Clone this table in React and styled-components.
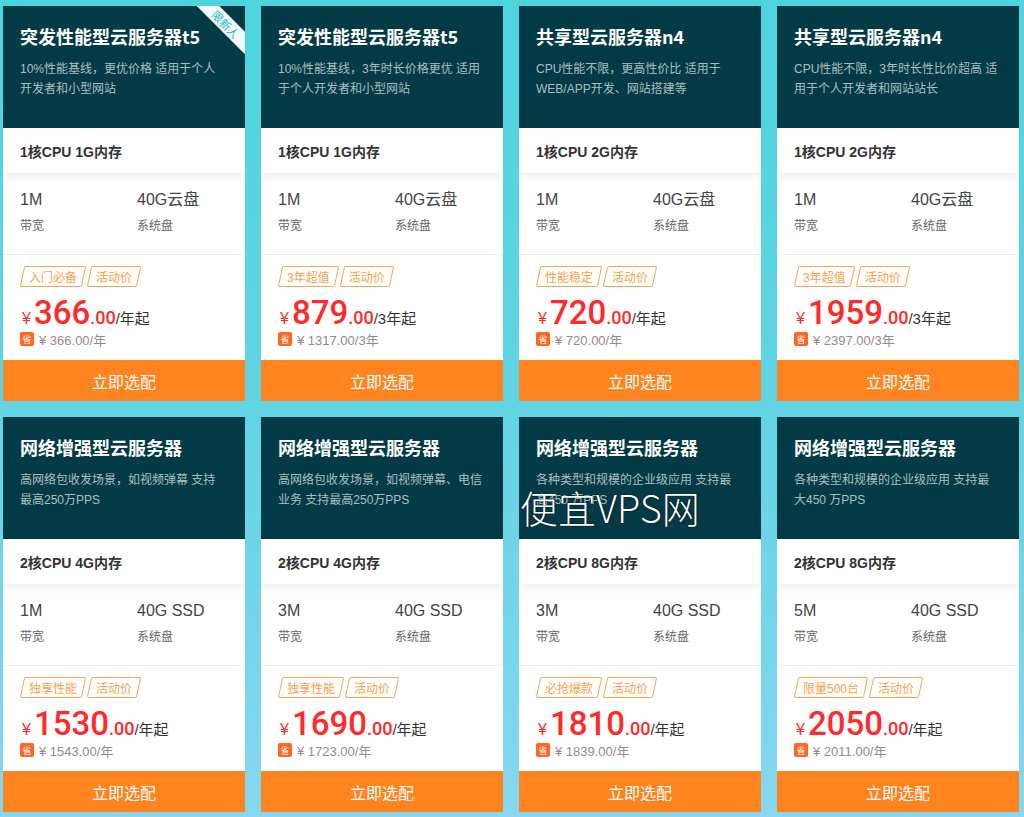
import React from 'react'
import styled, { createGlobalStyle } from 'styled-components'

const GlobalStyle = createGlobalStyle`
  html, body {
    margin: 0;
    padding: 0;
  }
  body {
    font-family: "Liberation Sans", "Noto Sans CJK SC", sans-serif;
    background: linear-gradient(180deg, #4dd4dc 0%, #62d4e3 50%, #86d7ef 100%);
    min-height: 817px;
  }
`

const products = [
  {
    title: '突发性能型云服务器t5',
    desc: ['10%性能基线，更优价格 适用于个人', '开发者和小型网站'],
    spec: '1核CPU 1G内存',
    bw: '1M',
    disk: '40G云盘',
    tags: ['入门必备', '活动价'],
    price: '366',
    unit: '/年起',
    save: '¥ 366.00/年',
    ribbon: '限新人'
  },
  {
    title: '突发性能型云服务器t5',
    desc: ['10%性能基线，3年时长价格更优 适用', '于个人开发者和小型网站'],
    spec: '1核CPU 1G内存',
    bw: '1M',
    disk: '40G云盘',
    tags: ['3年超值', '活动价'],
    price: '879',
    unit: '/3年起',
    save: '¥ 1317.00/3年'
  },
  {
    title: '共享型云服务器n4',
    desc: ['CPU性能不限，更高性价比 适用于', 'WEB/APP开发、网站搭建等'],
    spec: '1核CPU 2G内存',
    bw: '1M',
    disk: '40G云盘',
    tags: ['性能稳定', '活动价'],
    price: '720',
    unit: '/年起',
    save: '¥ 720.00/年'
  },
  {
    title: '共享型云服务器n4',
    desc: ['CPU性能不限，3年时长性比价超高 适', '用于个人开发者和网站站长'],
    spec: '1核CPU 2G内存',
    bw: '1M',
    disk: '40G云盘',
    tags: ['3年超值', '活动价'],
    price: '1959',
    unit: '/3年起',
    save: '¥ 2397.00/3年'
  },
  {
    title: '网络增强型云服务器',
    desc: ['高网络包收发场景，如视频弹幕 支持', '最高250万PPS'],
    spec: '2核CPU 4G内存',
    bw: '1M',
    disk: '40G SSD',
    tags: ['独享性能', '活动价'],
    price: '1530',
    unit: '/年起',
    save: '¥ 1543.00/年'
  },
  {
    title: '网络增强型云服务器',
    desc: ['高网络包收发场景，如视频弹幕、电信', '业务 支持最高250万PPS'],
    spec: '2核CPU 4G内存',
    bw: '3M',
    disk: '40G SSD',
    tags: ['独享性能', '活动价'],
    price: '1690',
    unit: '/年起',
    save: '¥ 1723.00/年'
  },
  {
    title: '网络增强型云服务器',
    desc: ['各种类型和规模的企业级应用 支持最', '高450 万PPS'],
    spec: '2核CPU 8G内存',
    bw: '3M',
    disk: '40G SSD',
    tags: ['必抢爆款', '活动价'],
    price: '1810',
    unit: '/年起',
    save: '¥ 1839.00/年'
  },
  {
    title: '网络增强型云服务器',
    desc: ['各种类型和规模的企业级应用 支持最', '大450 万PPS'],
    spec: '2核CPU 8G内存',
    bw: '5M',
    disk: '40G SSD',
    tags: ['限量500台', '活动价'],
    price: '2050',
    unit: '/年起',
    save: '¥ 2011.00/年'
  }
]

export default function App () {
  return (
    <>
      <GlobalStyle />
      <Page>
        <Grid>
          {products.map((p, i) => <Card key={i} item={p} />)}
        </Grid>
        <Watermark>便宜VPS网</Watermark>
      </Page>
    </>
  )
}

function Card ({ item }) {
  return (
    <CardWrap>
      <Header>
        <Title>{item.title}</Title>
        <Desc>
          {item.desc.map((line, i) => <span key={i}>{line}</span>)}
        </Desc>
        {item.ribbon && (
          <RibbonBox>
            <Ribbon>{item.ribbon}</Ribbon>
          </RibbonBox>
        )}
      </Header>
      <Spec>{item.spec}</Spec>
      <Details>
        <div>
          <Value>{item.bw}</Value>
          <Label>带宽</Label>
        </div>
        <div>
          <Value>{item.disk}</Value>
          <Label>系统盘</Label>
        </div>
      </Details>
      <PriceBox>
        <Tags>
          {item.tags.map(t => <Tag key={t}>{t}</Tag>)}
        </Tags>
        <PriceRow>
          <Yen>¥</Yen>
          <Amount>{item.price}</Amount>
          <Cents>.00</Cents>
          <Unit>{item.unit}</Unit>
        </PriceRow>
        <SaveRow>
          <SaveIcon>省</SaveIcon>
          <SaveText>{item.save}</SaveText>
        </SaveRow>
      </PriceBox>
      <BuyButton>立即选配</BuyButton>
    </CardWrap>
  )
}

const Page = styled.div`
  position: relative;
  height: 817px;
  overflow: hidden;
`

const Grid = styled.div`
  display: grid;
  grid-template-columns: repeat(4, 242px);
  grid-auto-rows: 395px;
  column-gap: 16px;
  row-gap: 16px;
  padding: 6px 0 0 3px;
`

const CardWrap = styled.div`
  display: flex;
  flex-direction: column;
  background: #fff;
  overflow: hidden;
`

const Header = styled.div`
  position: relative;
  height: 122px;
  box-sizing: border-box;
  padding: 18px 17px 0;
  background: #023b46;
  overflow: hidden;
`

const Title = styled.div`
  font-family: "Noto Sans CJK SC", sans-serif;
  font-size: 18px;
  line-height: 24px;
  font-weight: 700;
  color: #fff;
  white-space: nowrap;
`

const Desc = styled.div`
  margin-top: 11px;
  font-family: "Liberation Sans", "Noto Sans CJK SC", sans-serif;
  font-size: 12px;
  line-height: 20px;
  color: rgba(255, 255, 255, 0.68);

  span {
    display: block;
    white-space: nowrap;
  }
`

const RibbonBox = styled.div`
  position: absolute;
  top: 0;
  right: 0;
  width: 48px;
  height: 48px;
  overflow: hidden;
`

const Ribbon = styled.div`
  position: absolute;
  top: 10px;
  right: -17px;
  width: 72px;
  height: 16px;
  line-height: 16px;
  text-align: center;
  font-family: "Noto Sans CJK SC", sans-serif;
  font-size: 11px;
  color: #25b6c4;
  background: #effbfc;
  transform: rotate(45deg);
`

const Spec = styled.div`
  position: relative;
  z-index: 1;
  height: 45px;
  display: flex;
  align-items: center;
  padding: 0 17px;
  font-family: "Liberation Sans", "Noto Sans CJK SC", sans-serif;
  font-size: 14px;
  font-weight: 700;
  color: #333;
  background: #fff;
  box-shadow: 0 4px 8px rgba(0, 0, 0, 0.07);
`

const Details = styled.div`
  height: 82px;
  box-sizing: border-box;
  display: grid;
  grid-template-columns: 117px 1fr;
  padding: 16px 17px 0;
  border-bottom: 1px solid #eeeeee;
`

const Value = styled.div`
  font-family: "Liberation Sans", "Noto Sans CJK SC", sans-serif;
  font-size: 16px;
  line-height: 22px;
  color: #444;
`

const Label = styled.div`
  margin-top: 5px;
  font-family: "Noto Sans CJK SC", sans-serif;
  font-size: 12px;
  line-height: 18px;
  color: #666;
`

const PriceBox = styled.div`
  flex: 1;
  padding: 11px 17px 0;
`

const Tags = styled.div`
  display: flex;
  gap: 5px;
  height: 21px;
  padding-left: 2px;
`

const Tag = styled.span`
  position: relative;
  display: inline-flex;
  align-items: center;
  height: 21px;
  padding: 0 7px;
  font-family: "Liberation Sans", "Noto Sans CJK SC", sans-serif;
  font-size: 12px;
  color: #ffa04a;

  &::before {
    content: '';
    position: absolute;
    inset: 0;
    border: 1px solid #ffa24d;
    border-radius: 2px;
    transform: skewX(-12deg);
  }
`

const PriceRow = styled.div`
  display: flex;
  align-items: baseline;
  height: 36px;
  margin-top: 8px;
  padding-left: 2px;
  color: #ff2a2a;
  font-family: "Liberation Sans", "Noto Sans CJK SC", sans-serif;
`

const Yen = styled.span`
  font-size: 16px;
  margin-right: 3px;
`

const Amount = styled.span`
  font-family: Roboto, "Liberation Sans", sans-serif;
  font-size: 33px;
  font-weight: 500;
  line-height: 36px;
`

const Cents = styled.span`
  font-family: Roboto, "Liberation Sans", sans-serif;
  font-size: 18px;
  font-weight: 500;
`

const Unit = styled.span`
  font-size: 15px;
  color: #333;
`

const SaveRow = styled.div`
  display: flex;
  align-items: center;
  gap: 5px;
  height: 16px;
`

const SaveIcon = styled.span`
  display: inline-flex;
  align-items: center;
  justify-content: center;
  width: 14px;
  height: 14px;
  border-radius: 2px;
  background: #ff6723;
  color: #fff;
  font-family: "Noto Sans CJK SC", sans-serif;
  font-size: 9px;
`

const SaveText = styled.span`
  font-family: "Liberation Sans", "Noto Sans CJK SC", sans-serif;
  font-size: 13px;
  color: #978a8a;
`

const BuyButton = styled.button`
  height: 41px;
  border: 0;
  padding: 0;
  background: #ff8420;
  color: #fff;
  font-family: "Noto Sans CJK SC", sans-serif;
  font-size: 16px;
  cursor: pointer;
`

const Watermark = styled.div`
  position: absolute;
  left: 520px;
  top: 482px;
  font-family: "Noto Sans CJK SC", sans-serif;
  font-size: 38px;
  font-weight: 300;
  line-height: 50px;
  color: #fff;
  text-shadow: 0 0 1px #000, 0 0 1px #000;
  pointer-events: none;
`
